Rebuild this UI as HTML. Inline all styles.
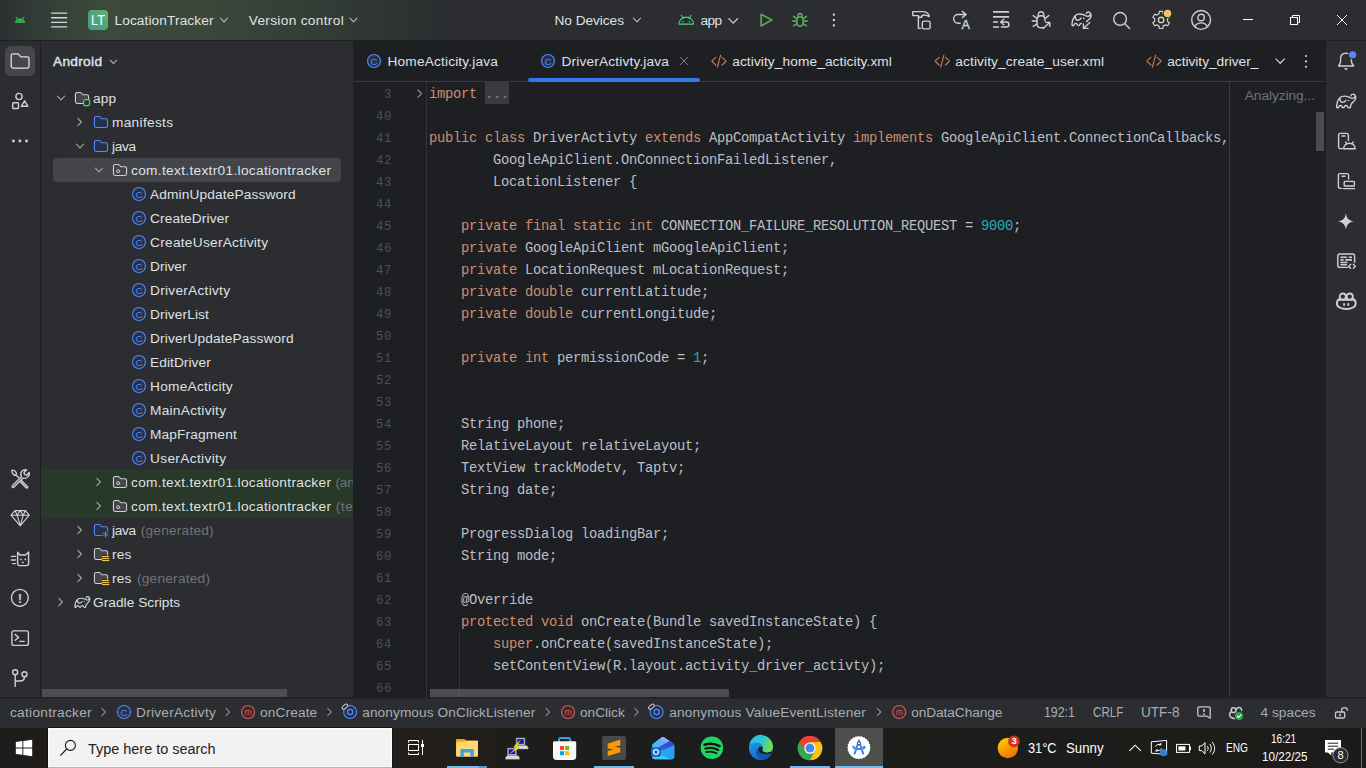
<!DOCTYPE html>
<html lang="en"><head><meta charset="utf-8"><title>LocationTracker - DriverActivty.java</title>
<style>
html,body{margin:0;padding:0;}
body{width:1366px;height:768px;overflow:hidden;background:#2b2d30;position:relative;font-family:"Liberation Sans",sans-serif;}
#root{position:absolute;left:0;top:0;width:1366px;height:768px;overflow:hidden;}
#root div,#root span,#root svg,#root pre{position:absolute;white-space:pre;}
#root pre{margin:0;}
#root pre span{position:static;}
#root span span{position:static;}
</style></head><body><div id="root">
<div style="left:0px;top:0px;width:1366px;height:40px;background:#2b2d30;background:linear-gradient(90deg,#2c2f30 0px,#333d37 40px,#3b4a3c 100px,#3a483b 200px,#343f37 300px,#2e3332 400px,#2b2d30 450px);"></div>
<div style="left:0px;top:40px;width:1366px;height:1px;background:#1e1f22;"></div>
<div style="left:0px;top:41px;width:40px;height:657px;background:#2b2d30;"></div>
<div style="left:40px;top:41px;width:1px;height:657px;background:#1e1f22;"></div>
<div style="left:41px;top:41px;width:312px;height:657px;background:#2b2d30;"></div>
<div style="left:1325px;top:41px;width:1px;height:657px;background:#1e1f22;"></div>
<div style="left:1326px;top:41px;width:40px;height:657px;background:#2b2d30;"></div>
<div style="left:0px;top:697px;width:1366px;height:1px;background:#1e1f22;"></div>
<div style="left:0px;top:698px;width:1366px;height:1px;background:#25272a;"></div>
<div style="left:0px;top:699px;width:1366px;height:29px;background:#2b2d30;"></div>
<div style="left:0px;top:728px;width:1366px;height:40px;background:#1c1c1c;background:linear-gradient(90deg,#1f1d1b 0px,#1f1c1a 300px,#241f1a 400px,#201d1a 480px,#1d1d1d 600px,#1c1d1f 760px,#1c1d1e 880px,#1c1e1a 900px,#1c1d1a 1100px,#1c1b19 1366px);"></div>
<div style="left:88px;top:10px;width:20px;height:20px;background:#4a9d7a;border-radius:4px;background:linear-gradient(45deg,#3e9b89,#60af69);"></div>
<span style="left:91.3px;top:10.0px;line-height:20px;font-size:14.2px;color:#ffffff;transform:scaleX(0.9023);transform-origin:0 50%;">LT</span>
<span style="left:114.5px;top:11.0px;line-height:20px;font-size:13.7px;color:#dfe1e5;letter-spacing:0.097px;">LocationTracker</span>
<span style="left:248.7px;top:11.0px;line-height:20px;font-size:13.7px;color:#dfe1e5;letter-spacing:0.318px;">Version control</span>
<span style="left:554.5px;top:11.0px;line-height:20px;font-size:13.7px;color:#dfe1e5;letter-spacing:-0.054px;">No Devices</span>
<span style="left:700.5px;top:11.0px;line-height:20px;font-size:13.7px;color:#dfe1e5;letter-spacing:-0.672px;">app</span>
<span style="left:53px;top:52.0px;line-height:20px;font-size:13.7px;color:#dfe1e5;letter-spacing:0.302px;-webkit-text-stroke:0.45px #dfe1e5;">Android</span>
<div style="left:53px;top:158px;width:288px;height:24px;background:#43454a;border-radius:4px;"></div>
<div style="left:41px;top:470px;width:312px;height:48px;background:#283829;"></div>
<span style="left:93px;top:89.0px;line-height:20px;font-size:13.7px;color:#dfe1e5;letter-spacing:0.078px;">app</span>
<span style="left:112px;top:113.0px;line-height:20px;font-size:13.7px;color:#dfe1e5;letter-spacing:0.303px;">manifests</span>
<span style="left:112px;top:137.0px;line-height:20px;font-size:13.7px;color:#dfe1e5;letter-spacing:-0.37px;">java</span>
<span style="left:131px;top:161.0px;line-height:20px;font-size:13.7px;color:#dfe1e5;letter-spacing:0.317px;">com.text.textr01.locationtracker</span>
<span style="left:150px;top:185.0px;line-height:20px;font-size:13.7px;color:#dfe1e5;letter-spacing:0.143px;">AdminUpdatePassword</span>
<span style="left:150px;top:209.0px;line-height:20px;font-size:13.7px;color:#dfe1e5;letter-spacing:0.128px;">CreateDriver</span>
<span style="left:150px;top:233.0px;line-height:20px;font-size:13.7px;color:#dfe1e5;letter-spacing:0.274px;">CreateUserActivity</span>
<span style="left:150px;top:257.0px;line-height:20px;font-size:13.7px;color:#dfe1e5;">Driver</span>
<span style="left:150px;top:281.0px;line-height:20px;font-size:13.7px;color:#dfe1e5;letter-spacing:0.266px;">DriverActivty</span>
<span style="left:150px;top:305.0px;line-height:20px;font-size:13.7px;color:#dfe1e5;letter-spacing:0.11px;">DriverList</span>
<span style="left:150px;top:329.0px;line-height:20px;font-size:13.7px;color:#dfe1e5;letter-spacing:0.151px;">DriverUpdatePassword</span>
<span style="left:150px;top:353.0px;line-height:20px;font-size:13.7px;color:#dfe1e5;letter-spacing:0.078px;">EditDriver</span>
<span style="left:150px;top:377.0px;line-height:20px;font-size:13.7px;color:#dfe1e5;letter-spacing:0.258px;">HomeActicity</span>
<span style="left:150px;top:401.0px;line-height:20px;font-size:13.7px;color:#dfe1e5;letter-spacing:0.271px;">MainActivity</span>
<span style="left:150px;top:425.0px;line-height:20px;font-size:13.7px;color:#dfe1e5;letter-spacing:0.15px;">MapFragment</span>
<span style="left:150px;top:449.0px;line-height:20px;font-size:13.7px;color:#dfe1e5;letter-spacing:0.341px;">UserActivity</span>
<span style="left:131px;top:473.0px;line-height:20px;font-size:13.7px;color:#dfe1e5;letter-spacing:0.317px;">com.text.textr01.locationtracker</span>
<span style="left:335.5px;top:473.0px;line-height:20px;font-size:13.7px;color:#6f737a;letter-spacing:-0.241px;">(androidTest)</span>
<span style="left:131px;top:497.0px;line-height:20px;font-size:13.7px;color:#dfe1e5;letter-spacing:0.317px;">com.text.textr01.locationtracker</span>
<span style="left:335.7px;top:497.0px;line-height:20px;font-size:13.7px;color:#6f737a;letter-spacing:0.562px;">(test)</span>
<span style="left:112px;top:521.0px;line-height:20px;font-size:13.7px;color:#dfe1e5;letter-spacing:-0.37px;">java</span>
<span style="left:140.7px;top:521.0px;line-height:20px;font-size:13.7px;color:#6f737a;letter-spacing:0.223px;">(generated)</span>
<span style="left:112px;top:545.0px;line-height:20px;font-size:13.7px;color:#dfe1e5;letter-spacing:0.142px;">res</span>
<span style="left:112px;top:569.0px;line-height:20px;font-size:13.7px;color:#dfe1e5;letter-spacing:0.142px;">res</span>
<span style="left:137px;top:569.0px;line-height:20px;font-size:13.7px;color:#6f737a;letter-spacing:0.223px;">(generated)</span>
<span style="left:93px;top:593.0px;line-height:20px;font-size:13.7px;color:#dfe1e5;letter-spacing:0.037px;">Gradle Scripts</span>
<div style="left:42px;top:689px;width:245px;height:8px;background:#4d4e51;"></div>
<div style="left:353px;top:41px;width:972px;height:657px;background:#1e1f22;"></div>
<div style="left:354px;top:81px;width:971px;height:1px;background:#393b40;"></div>
<div style="left:528px;top:78px;width:172px;height:4px;background:#3574f0;border-radius:2px;"></div>
<span style="left:387.5px;top:52.0px;line-height:20px;font-size:13.7px;color:#dfe1e5;letter-spacing:0.165px;">HomeActicity.java</span>
<span style="left:561.4px;top:52.0px;line-height:20px;font-size:13.7px;color:#dfe1e5;letter-spacing:0.17px;">DriverActivty.java</span>
<span style="left:732.2px;top:52.0px;line-height:20px;font-size:13.7px;color:#dfe1e5;letter-spacing:0.1px;">activity_home_acticity.xml</span>
<span style="left:955.3px;top:52.0px;line-height:20px;font-size:13.7px;color:#dfe1e5;letter-spacing:0.115px;">activity_create_user.xml</span>
<span style="left:1167.2px;top:52.0px;line-height:20px;font-size:13.7px;color:#dfe1e5;letter-spacing:-0.005px;">activity_driver_</span>
<span style="left:1244.8px;top:86.0px;line-height:20px;font-size:13.7px;color:#6f737a;letter-spacing:-0.07px;">Analyzing...</span>
<div style="left:426px;top:82px;width:1px;height:616px;background:#313438;"></div>
<div style="left:1229px;top:82px;width:1px;height:615px;background:#393b40;"></div>
<div style="left:459px;top:632px;width:1px;height:65px;background:#313438;"></div>
<div style="left:485px;top:82px;width:24px;height:22px;background:#393b40;"></div>
<div style="left:1316px;top:112px;width:8px;height:39px;background:#4a4b4e;"></div>
<div style="left:430px;top:689px;width:299px;height:8px;background:#4d4e51;"></div>
<div style="left:354px;top:82px;width:972px;height:615px;overflow:hidden;"><pre style="left:0;top:1.5px;width:38px;text-align:right;color:#4b5059;font-family:'Liberation Mono',monospace;font-size:13.8px;letter-spacing:-0.281px;line-height:22px;font-size:12.2px;letter-spacing:0.68px;">3
40
41
42
43
44
45
46
47
48
49
50
51
52
53
54
55
56
57
58
59
60
61
62
63
64
65
66</pre><pre style="left:75px;top:1.5px;color:#bcbec4;font-family:'Liberation Mono',monospace;font-size:13.8px;letter-spacing:-0.281px;line-height:22px;"><span style="color:#cf8e6d">import</span> <span style="color:#868a91">...</span>

<span style="color:#cf8e6d">public</span> <span style="color:#cf8e6d">class</span> DriverActivty <span style="color:#cf8e6d">extends</span> AppCompatActivity <span style="color:#cf8e6d">implements</span> GoogleApiClient.ConnectionCallbacks,
        GoogleApiClient.OnConnectionFailedListener,
        LocationListener {

    <span style="color:#cf8e6d">private</span> <span style="color:#cf8e6d">final</span> <span style="color:#cf8e6d">static</span> <span style="color:#cf8e6d">int</span> CONNECTION_FAILURE_RESOLUTION_REQUEST = <span style="color:#2aacb8">9000</span>;
    <span style="color:#cf8e6d">private</span> GoogleApiClient mGoogleApiClient;
    <span style="color:#cf8e6d">private</span> LocationRequest mLocationRequest;
    <span style="color:#cf8e6d">private</span> <span style="color:#cf8e6d">double</span> currentLatitude;
    <span style="color:#cf8e6d">private</span> <span style="color:#cf8e6d">double</span> currentLongitude;

    <span style="color:#cf8e6d">private</span> <span style="color:#cf8e6d">int</span> permissionCode = <span style="color:#2aacb8">1</span>;


    String phone;
    RelativeLayout relativeLayout;
    TextView trackModetv, Taptv;
    String date;

    ProgressDialog loadingBar;
    String mode;

    @Override
    <span style="color:#cf8e6d">protected</span> <span style="color:#cf8e6d">void</span> onCreate(Bundle savedInstanceState) {
        <span style="color:#cf8e6d">super</span>.onCreate(savedInstanceState);
        setContentView(R.layout.activity_driver_activty);
</pre></div>
<div style="left:430px;top:689px;width:299px;height:8px;background:#4c4d50;"></div>
<div style="left:459px;top:689px;width:1px;height:8px;background:#58595d;"></div>
<span style="left:10px;top:703.0px;line-height:20px;font-size:13.7px;color:#a8adb5;letter-spacing:0.27px;">cationtracker</span>
<span style="left:136px;top:703.0px;line-height:20px;font-size:13.7px;color:#a8adb5;letter-spacing:0.249px;">DriverActivty</span>
<span style="left:260px;top:703.0px;line-height:20px;font-size:13.7px;color:#a8adb5;letter-spacing:0.127px;">onCreate</span>
<span style="left:362.2px;top:703.0px;line-height:20px;font-size:13.7px;color:#a8adb5;letter-spacing:0.08px;">anonymous OnClickListener</span>
<span style="left:580px;top:703.0px;line-height:20px;font-size:13.7px;color:#a8adb5;letter-spacing:-0.015px;">onClick</span>
<span style="left:669.3px;top:703.0px;line-height:20px;font-size:13.7px;color:#a8adb5;letter-spacing:0.157px;">anonymous ValueEventListener</span>
<span style="left:911.3px;top:703.0px;line-height:20px;font-size:13.7px;color:#a8adb5;letter-spacing:-0.099px;">onDataChange</span>
<span style="left:1044.4px;top:702.0px;line-height:20px;font-size:14.2px;color:#a8adb5;transform:scaleX(0.8672);transform-origin:0 50%;">192:1</span>
<span style="left:1092.8px;top:702.0px;line-height:20px;font-size:14.2px;color:#a8adb5;transform:scaleX(0.8202);transform-origin:0 50%;">CRLF</span>
<span style="left:1140.6px;top:702.0px;line-height:20px;font-size:14.2px;color:#a8adb5;transform:scaleX(0.9576);transform-origin:0 50%;">UTF-8</span>
<span style="left:1260.5px;top:703.0px;line-height:20px;font-size:13.7px;color:#a8adb5;letter-spacing:0.029px;">4 spaces</span>
<div style="left:47px;top:727px;width:346px;height:41px;background:#151515;"></div>
<div style="left:48px;top:728px;width:344px;height:39px;background:#fafafa;"></div>
<div style="left:49px;top:729px;width:342px;height:38px;background:#f2f2f2;"></div>
<div style="left:48px;top:767px;width:344px;height:1px;background:#b8b8b8;"></div>
<span style="left:88.2px;top:738.66px;line-height:20px;font-size:15.4px;color:#222222;transform:scaleX(0.938);transform-origin:0 50%;">Type here to search</span>
<div style="left:835px;top:728px;width:48px;height:40px;background:#4d4f4c;"></div>
<div style="left:447px;top:766px;width:40px;height:2px;background:#76b9ed;"></div>
<div style="left:594px;top:766px;width:40px;height:2px;background:#76b9ed;"></div>
<div style="left:790px;top:766px;width:40px;height:2px;background:#76b9ed;"></div>
<div style="left:835px;top:766px;width:48px;height:2px;background:#76b9ed;"></div>
<div style="left:478.6px;top:766px;width:0.8px;height:2px;background:#1c1c1c;"></div>
<div style="left:479.4px;top:766px;width:7.6px;height:2px;background:#5f98c8;"></div>
<span style="left:1028.4px;top:737.87px;line-height:20px;font-size:14.8px;color:#ffffff;transform:scaleX(0.865);transform-origin:0 50%;">31°C</span>
<span style="left:1066.4px;top:737.87px;line-height:20px;font-size:14.8px;color:#ffffff;transform:scaleX(0.8959);transform-origin:0 50%;">Sunny</span>
<span style="left:1225.6px;top:737.63px;line-height:20px;font-size:12.6px;color:#ffffff;transform:scaleX(0.806);transform-origin:0 50%;">ENG</span>
<span style="left:1270.8px;top:728.84px;line-height:20px;font-size:12px;color:#ffffff;transform:scaleX(0.8391);transform-origin:0 50%;">16:21</span>
<span style="left:1261.6px;top:746.84px;line-height:20px;font-size:12px;color:#ffffff;transform:scaleX(0.9718);transform-origin:0 50%;">10/22/25</span>
<svg style="left:0;top:0" width="1366" height="768" viewBox="0 0 1366 768" fill="none"><g transform="translate(0 0)" ><path d="M15 22.9 A5.05 4.7 0 0 1 25.1 22.9 Z" fill="#34a853"/><path d="M16.1 17.2 L18.1 20 M24 17.2 L22 20" stroke="#34a853" stroke-width="1.1" fill="none" stroke-linecap="round" stroke-linejoin="round"/><rect x="17.3" y="20.6" width="0.6" height="1.5" fill="#237a41"/><rect x="22.2" y="20.6" width="0.6" height="1.5" fill="#237a41"/></g><rect x="51" y="12.549999999999999" width="16.2" height="1.3" rx="0.5" fill="#d3d5da"/><rect x="51" y="17.1" width="16.2" height="1.3" rx="0.5" fill="#d3d5da"/><rect x="51" y="21.650000000000002" width="16.2" height="1.3" rx="0.5" fill="#d3d5da"/><rect x="51" y="26.200000000000003" width="16.2" height="1.3" rx="0.5" fill="#d3d5da"/><path d="M220.45 18.2 L224 21.8 L227.55 18.2" stroke="#b4b8bf" stroke-width="1.1" fill="none" stroke-linecap="round" stroke-linejoin="round"/><path d="M349.95 18.2 L353.5 21.8 L357.05 18.2" stroke="#b4b8bf" stroke-width="1.1" fill="none" stroke-linecap="round" stroke-linejoin="round"/><path d="M633.45 18.2 L637 21.8 L640.55 18.2" stroke="#b4b8bf" stroke-width="1.1" fill="none" stroke-linecap="round" stroke-linejoin="round"/><path d="M728.9000000000001 18.75 L733.2 23.049999999999997 L737.5 18.75" stroke="#ced0d6" stroke-width="1.2" fill="none" stroke-linecap="round" stroke-linejoin="round"/><g transform="translate(678 10)" ><path d="M0.9 14.1 A7.3 7 0 0 1 15.5 14.1 Z" stroke="#3ddc84" stroke-width="1.05" fill="none" stroke-linecap="round" stroke-linejoin="round"/><path d="M3.4 5.3 L5.3 8.4 M13 5.3 L11.1 8.4" stroke="#3ddc84" stroke-width="1.05" fill="none" stroke-linecap="round" stroke-linejoin="round"/><circle cx="5" cy="11.7" r="0.7" fill="#3ddc84"/><circle cx="11.4" cy="11.7" r="0.7" fill="#3ddc84"/></g><path d="M761.2 14.3 L771.8 20.05 L761.2 25.9 Z" stroke="#5aa55c" stroke-width="1.8" fill="none" stroke-linecap="round" stroke-linejoin="round"/><g transform="translate(790 10)" ><path d="M10 6.7 C12 6.7 13.1 8 13.1 10 V12.8 C13.1 14.8 12 16.1 10 16.1 C8 16.1 6.9 14.8 6.9 12.8 V10 C6.9 8 8 6.7 10 6.7 Z" stroke="#5aa55c" stroke-width="1.6" fill="none" stroke-linecap="round" stroke-linejoin="round"/><path d="M7.7 6.8 C7.7 4.7 8.7 3.6 10 3.6 C11.3 3.6 12.3 4.7 12.3 6.8" stroke="#5aa55c" stroke-width="1.6" fill="none" stroke-linecap="round" stroke-linejoin="round"/><path d="M3.5 6.4 L6.5 8.5 M2.8 11.1 H6.6 M3.5 15.9 L6.5 13.8 M16.5 6.4 L13.5 8.5 M17.2 11.1 H13.4 M16.5 15.9 L13.5 13.8" stroke="#5aa55c" stroke-width="1.6" fill="none" stroke-linecap="round" stroke-linejoin="round"/></g><circle cx="833.9" cy="14.7" r="1.15" fill="#dfe1e5"/><circle cx="833.9" cy="20" r="1.15" fill="#dfe1e5"/><circle cx="833.9" cy="25.4" r="1.15" fill="#dfe1e5"/><g transform="translate(911 10)" ><path d="M1.8 1.6 H11.6 C15.2 1.6 17.6 3.6 18.3 6.5 L15.2 5.3 C13.8 4.7 12.2 4.9 10.8 5.8 V7.2 H7.4 V5.6 H1.8 Z" stroke="#ced0d6" stroke-width="1.4" fill="none" stroke-linecap="round" stroke-linejoin="round"/><path d="M7.4 7.2 V18.4 H9.6" stroke="#ced0d6" stroke-width="1.4" fill="none" stroke-linecap="round" stroke-linejoin="round"/><rect x="11.3" y="11.1" width="7.8" height="7.8" rx="1.6" stroke="#ced0d6" stroke-width="1.4" fill="none" stroke-linecap="round" stroke-linejoin="round"/></g><g transform="translate(951 10)" ><path d="M9.2 13.2 H7 A4.35 4.35 0 0 1 7 4.5 H15 M11.3 1.4 L15.2 4.5 L11.3 7.6" stroke="#ced0d6" stroke-width="1.4" fill="none" stroke-linecap="round" stroke-linejoin="round"/><text x="14.6" y="18.7" font-size="12.6" font-family="Liberation Sans, sans-serif" text-anchor="middle" fill="#ced0d6" stroke="#ced0d6" stroke-width="0.35">A</text></g><g transform="translate(991 10)" ><path d="M2 1.9 H18.1 M2 6.9 H18.1 M2 12 H7 M2 17 H8" stroke="#ced0d6" stroke-width="1.7" fill="none" stroke-linecap="butt" stroke-linejoin="round"/><path d="M12.8 9.2 L9.6 12 L12.8 14.8 M9.8 12 H15.4 A2.5 2.5 0 0 1 15.4 17 H10.4" stroke="#ced0d6" stroke-width="1.5" fill="none" stroke-linecap="round" stroke-linejoin="round"/></g><g transform="translate(1031 10)" ><path d="M12.4 17.4 C11.6 17.7 10.8 17.8 10 17.8 C7.6 17.8 6 16 6 13.4 V9.8 C6 7.4 7.6 5.8 10 5.8 C12.4 5.8 14 7.4 14 9.8 V11" stroke="#ced0d6" stroke-width="1.4" fill="none" stroke-linecap="round" stroke-linejoin="round"/><path d="M7 6.4 C7 3.4 8.2 1.8 10 1.8 C11.8 1.8 13 3.4 13 6.4" stroke="#ced0d6" stroke-width="1.4" fill="none" stroke-linecap="round" stroke-linejoin="round"/><path d="M2.2 5.6 L5.8 8.2 M1.2 11 H5.8 M2.2 16.4 L5.8 14 M17.8 5.6 L14.4 8.2" stroke="#ced0d6" stroke-width="1.4" fill="none" stroke-linecap="round" stroke-linejoin="round"/><path d="M12.2 18.6 L18.6 12.5 M14.8 12.4 H18.8 V16.4" stroke="#ced0d6" stroke-width="1.4" fill="none" stroke-linecap="round" stroke-linejoin="round"/></g><g transform="translate(1067.35 5.9) scale(1.0)"><path d="M4.7 19.4 C4.5 16 5.5 12.5 8 9.6 C10 7.6 15 7.6 18.1 9.7 C20 10.8 22 10.6 22.8 9 C23.6 7.4 22.6 6 21 6.1 C19.8 6.2 19 6.8 19 7.7 M23.2 7.6 C24.4 10 23 12.6 20.6 14.4 C20 14.8 19.6 15.2 19.2 15.6 M4.7 19.4 C5.5 20.4 6.6 19.4 7 18.4 C7.6 17.2 9 17.2 9.8 18.4 C10.6 20.2 11.8 20.2 12.6 18.4 C12.9 17.8 13.4 17.5 14 17.5 M7.9 10 C7.9 12.6 8.8 14.4 10.4 14.4 C12 14.4 13.2 13.4 13.8 12.3" stroke="#ced0d6" stroke-width="1.4" fill="none" stroke-linecap="round" stroke-linejoin="round"/><circle cx="16.4" cy="12.5" r="0.8" fill="#ced0d6"/></g><path d="M1089.8 22.4 L1083.6 28.2 M1083.4 24 V28.4 H1088" stroke="#ced0d6" stroke-width="1.4" fill="none" stroke-linecap="round" stroke-linejoin="round"/><g transform="translate(1111 10)" ><circle cx="9.1" cy="8.9" r="6.35" stroke="#ced0d6" stroke-width="1.4" fill="none" stroke-linecap="round" stroke-linejoin="round"/><path d="M13.8 13.7 L18.6 18.5" stroke="#ced0d6" stroke-width="1.4" fill="none" stroke-linecap="round" stroke-linejoin="round"/></g><g transform="translate(1151 10)" ><path d="M8.03 3.79 L8.38 1.42 L11.82 1.42 L12.17 3.79 L14.40 5.07 L16.63 4.20 L18.35 7.18 L16.47 8.67 L16.47 11.23 L18.35 12.72 L16.63 15.70 L14.40 14.83 L12.17 16.11 L11.82 18.48 L8.38 18.48 L8.03 16.11 L5.80 14.83 L3.57 15.70 L1.85 12.72 L3.73 11.23 L3.73 8.67 L1.85 7.18 L3.57 4.20 L5.80 5.07 Z" stroke="#ced0d6" stroke-width="1.2" fill="none" stroke-linecap="round" stroke-linejoin="round" /><circle cx="10.1" cy="9.95" r="2.7" stroke="#ced0d6" stroke-width="1.4" fill="none" stroke-linecap="round" stroke-linejoin="round"/><circle cx="16.5" cy="3.4" r="4.6" fill="#2b2d30"/><circle cx="16.5" cy="3.4" r="3.7" fill="#f2c55c"/></g><g transform="translate(1191 10)" ><circle cx="10.1" cy="9.95" r="9.4" stroke="#ced0d6" stroke-width="1.4" fill="none" stroke-linecap="round" stroke-linejoin="round"/><circle cx="10.1" cy="7.5" r="3.25" stroke="#ced0d6" stroke-width="1.4" fill="none" stroke-linecap="round" stroke-linejoin="round"/><path d="M3.6 16.7 C5.2 14.2 7.4 12.9 10.1 12.9 C12.8 12.9 15 14.2 16.6 16.7" stroke="#ced0d6" stroke-width="1.4" fill="none" stroke-linecap="round" stroke-linejoin="round"/></g><rect x="1243" y="19" width="10" height="1" fill="#ffffff"/><rect x="1290.5" y="17.5" width="7" height="7" fill="none" stroke="#ffffff" stroke-width="1"/><path d="M1292.5 17 V15.5 H1299.5 V22.5 H1298" fill="none" stroke="#ffffff" stroke-width="1"/><path d="M1337 15 L1347 25 M1347 15 L1337 25" stroke="#ffffff" stroke-width="1" fill="none"/><rect x="5" y="46" width="30" height="30" rx="6" fill="#45474b"/><path d="M12.799999999999999 53.9 H17.4 C18.2 53.9 18.6 54.199999999999996 19.1 54.8 L20.799999999999997 56.8 H27.2 C28.2 56.8 29.0 57.6 29.0 58.6 V66.3 C29.0 67.3 28.2 68.1 27.2 68.1 H13.0 C12.0 68.1 11.2 67.3 11.2 66.3 V55.5 C11.2 54.6 11.899999999999999 53.9 12.799999999999999 53.9 Z" stroke="#dfe1e5" stroke-width="1.3" fill="none" stroke-linecap="round" stroke-linejoin="round"/><circle cx="19" cy="96.5" r="3.1" stroke="#ced0d6" stroke-width="1.4" fill="none" stroke-linecap="round" stroke-linejoin="round"/><rect x="12.7" y="102.7" width="5.8" height="5.8" rx="0.8" stroke="#ced0d6" stroke-width="1.4" fill="none" stroke-linecap="round" stroke-linejoin="round"/><path d="M24.6 100.8 L27.8 106.2 H21.4 Z" stroke="#ced0d6" stroke-width="1.4" fill="none" stroke-linecap="round" stroke-linejoin="round"/><circle cx="13.4" cy="141" r="1.45" fill="#ced0d6"/><circle cx="19.9" cy="141" r="1.45" fill="#ced0d6"/><circle cx="26.5" cy="141" r="1.45" fill="#ced0d6"/><g transform="translate(10 468)" ><path d="M2.6 17.6 L11.2 9 M4 19 L12.6 10.4 M2.6 17.6 C2 18.2 2 18.8 2.6 19.2 C3.1 19.7 3.6 19.6 4 19" stroke="#ced0d6" stroke-width="1.4" fill="none" stroke-linecap="round" stroke-linejoin="round"/><path d="M11.4 8.8 C10.4 6.6 10.8 4.2 12.4 2.8 C13.6 1.8 15.2 1.4 16.6 1.8 L14 4.6 L14.6 6.6 L16.6 7.2 L19.2 4.4 C19.6 5.8 19.4 7.4 18.2 8.6 C16.8 10.2 14.6 10.6 12.8 10.2" stroke="#ced0d6" stroke-width="1.4" fill="none" stroke-linecap="round" stroke-linejoin="round"/><path d="M2 2.2 C3 2 4.6 2.6 5.6 3.8 C6.4 4.8 6.6 6 6.2 6.6 L5.6 7.2 C4.8 7.4 3.8 7 3 6 C2 4.8 1.6 3.2 2 2.2 Z M6 7 L8.8 9.8 M11.4 12.4 L17.4 18.4 C17.9 18.9 17.9 19.3 17.4 19.7 C17 20.1 16.5 20.1 16 19.7 L10 13.6" stroke="#ced0d6" stroke-width="1.4" fill="none" stroke-linecap="round" stroke-linejoin="round"/></g><g transform="translate(10 508)" ><path d="M5 2.6 H15.4 L19.2 7.2 L10.2 17.8 L1 7.2 Z M1 7.2 H19.2 M5 2.6 L7.2 7.2 L10.2 17.8 L13.2 7.2 L15.4 2.6 M7.2 7.2 L10.2 2.6 L13.2 7.2" stroke="#ced0d6" stroke-width="1.1" fill="none" stroke-linecap="round" stroke-linejoin="round"/></g><g transform="translate(10 548)" ><path d="M7.6 4.2 L10 7 H15.6 L18.6 4 V15.6 C18.6 16.8 17.8 17.6 16.6 17.6 H9.6 C8.4 17.6 7.6 16.8 7.6 15.6 Z" stroke="#ced0d6" stroke-width="1.4" fill="none" stroke-linecap="round" stroke-linejoin="round"/><path d="M1.4 8.4 H5.4 M1.4 12 H5.4 M2.6 15.6 H5.4" stroke="#ced0d6" stroke-width="1.4" fill="none" stroke-linecap="round" stroke-linejoin="round"/><circle cx="10.9" cy="11.4" r="0.9" fill="#ced0d6"/><circle cx="15.3" cy="11.4" r="0.9" fill="#ced0d6"/><path d="M12.4 14.2 H13.8 L13.1 15 Z" stroke="#ced0d6" stroke-width="0.8" fill="#ced0d6" stroke-linecap="round" stroke-linejoin="round"/></g><circle cx="19.85" cy="597.8" r="8.4" stroke="#ced0d6" stroke-width="1.4" fill="none" stroke-linecap="round" stroke-linejoin="round"/><text x="19.85" y="602.9" font-size="13.2" font-weight="700" font-family="Liberation Sans, sans-serif" text-anchor="middle" fill="#ced0d6">!</text><rect x="11.9" y="630.9" width="16.5" height="14.5" rx="2" stroke="#ced0d6" stroke-width="1.4" fill="none" stroke-linecap="round" stroke-linejoin="round"/><path d="M15.2 634.6 L18.6 637.4 L15.2 640.2 M19.8 641.4 H24.2" stroke="#ced0d6" stroke-width="1.4" fill="none" stroke-linecap="round" stroke-linejoin="round"/><circle cx="15.2" cy="672.3" r="2.5" stroke="#ced0d6" stroke-width="1.4" fill="none" stroke-linecap="round" stroke-linejoin="round"/><circle cx="24.5" cy="674.2" r="2.5" stroke="#ced0d6" stroke-width="1.4" fill="none" stroke-linecap="round" stroke-linejoin="round"/><path d="M15.2 674.8 V686.4 M24.5 676.7 C24.5 679.6 22.8 681 20 681 H15.2" stroke="#ced0d6" stroke-width="1.4" fill="none" stroke-linecap="round" stroke-linejoin="round"/><g transform="translate(1336 51)" ><path d="M2.5 15 C3.9 13.4 4.6 12 4.6 10 V7.8 C4.6 4.4 6.8 2.2 10 2.2 C13.2 2.2 15.4 4.4 15.4 7.8 V10 C15.4 12 16.1 13.4 17.7 15 Z" stroke="#ced0d6" stroke-width="1.4" fill="none" stroke-linecap="round" stroke-linejoin="round"/><path d="M8 17.3 H12 C11.6 18.4 10.9 18.9 10 18.9 C9.1 18.9 8.4 18.4 8 17.3 Z" fill="#ced0d6"/><circle cx="16.6" cy="3.75" r="4.5" fill="#2b2d30"/><circle cx="16.6" cy="3.75" r="3.6" fill="#548af7"/></g><g transform="translate(1332 88) scale(1.0)"><path d="M4.7 19.4 C4.5 16 5.5 12.5 8 9.6 C10 7.6 15 7.6 18.1 9.7 C20 10.8 22 10.6 22.8 9 C23.6 7.4 22.6 6 21 6.1 C19.8 6.2 19 6.8 19 7.7 M23.2 7.6 C24.4 10 23 12.6 20.6 14.4 C19 15.6 18.4 17 18.4 19.4 M4.7 19.4 C5.5 20.4 6.6 19.4 7 18.4 C7.6 17.2 9 17.2 9.8 18.4 C10.6 20.2 11.8 20.2 12.6 18.4 C13.2 17.2 14.8 17.2 15.4 18.4 C16.2 20.2 17.6 20.2 18.4 19.4 M7.9 10 C7.9 12.6 8.8 14.4 10.4 14.4 C12 14.4 13.2 13.4 13.8 12.3" stroke="#ced0d6" stroke-width="1.4" fill="none" stroke-linecap="round" stroke-linejoin="round"/><circle cx="16.4" cy="12.5" r="0.8" fill="#ced0d6"/></g><g transform="translate(1336 131)" ><path d="M6.4 17.6 H4.4 C3.2 17.6 2.6 17 2.6 15.8 V4.2 C2.6 3 3.2 2.4 4.4 2.4 H10.6 C11.8 2.4 12.4 3 12.4 4.2 V9.4" stroke="#ced0d6" stroke-width="1.4" fill="none" stroke-linecap="round" stroke-linejoin="round"/><path d="M6 5 H9" stroke="#ced0d6" stroke-width="1.4" fill="none" stroke-linecap="round" stroke-linejoin="round"/><path d="M7.6 17.8 A5.8 5.6 0 0 1 19.2 17.8 Z" stroke="#ced0d6" stroke-width="1.4" fill="none" stroke-linecap="round" stroke-linejoin="round"/><path d="M9.6 11 L10.8 12.8 M17.2 11 L16 12.8" stroke="#ced0d6" stroke-width="1.4" fill="none" stroke-linecap="round" stroke-linejoin="round"/></g><g transform="translate(1336 171)" ><path d="M5.6 17.4 H4.2 C3 17.4 2.4 16.8 2.4 15.6 V4.4 C2.4 3.2 3 2.6 4.2 2.6 H10.8 C12 2.6 12.6 3.2 12.6 4.4 V8" stroke="#ced0d6" stroke-width="1.4" fill="none" stroke-linecap="round" stroke-linejoin="round"/><path d="M6 5.2 H9" stroke="#ced0d6" stroke-width="1.4" fill="none" stroke-linecap="round" stroke-linejoin="round"/><rect x="8.2" y="10.4" width="10.2" height="4.6" rx="0.8" stroke="#ced0d6" stroke-width="1.4" fill="none" stroke-linecap="round" stroke-linejoin="round"/><path d="M7.4 17.6 H18.6" stroke="#ced0d6" stroke-width="1.4" fill="none" stroke-linecap="round" stroke-linejoin="round"/></g><path d="M1345.9 213.2 C1346.5 218.2 1349 220.8 1354.1 221.4 C1349 222 1346.5 224.6 1345.9 229.6 C1345.3 224.6 1342.8 222 1337.7 221.4 C1342.8 220.8 1345.3 218.2 1345.9 213.2 Z" fill="#ced0d6"/><g transform="translate(1336 251)" ><path d="M12 16.4 H3.8 C2.6 16.4 1.8 15.6 1.8 14.4 V5 C1.8 3.8 2.6 3 3.8 3 H16.6 C17.8 3 18.6 3.8 18.6 5 V11.2" stroke="#ced0d6" stroke-width="1.4" fill="none" stroke-linecap="round" stroke-linejoin="round"/><path d="M4.4 6.3 H11 M12.6 6.3 H16 M4.4 8.9 H7.6 M9.2 8.9 H16 M4.4 11.5 H11.4 M4.4 13.8 H11" stroke="#ced0d6" stroke-width="1.6" fill="none" stroke-linecap="butt" stroke-linejoin="round"/><path d="M14.6 13.4 L12.8 15.3 L14.6 17.2 M17.4 13.4 L19.2 15.3 L17.4 17.2" stroke="#ced0d6" stroke-width="1.5" fill="none" stroke-linecap="round" stroke-linejoin="round"/></g><g transform="translate(1336 291)" ><path d="M3.6 8 C1.6 8.8 0.9 10.4 0.9 12.4 C0.9 15.8 5 18 10.3 18 C15.6 18 19.7 15.8 19.7 12.4 C19.7 10.4 19 8.8 17 8" stroke="#ced0d6" stroke-width="1.9" fill="none" stroke-linecap="round" stroke-linejoin="round"/><circle cx="6.8" cy="5.6" r="3.1" stroke="#ced0d6" stroke-width="1.8" fill="none" stroke-linecap="round" stroke-linejoin="round"/><circle cx="13.7" cy="5.6" r="3.1" stroke="#ced0d6" stroke-width="1.8" fill="none" stroke-linecap="round" stroke-linejoin="round"/><path d="M3.6 8.9 H17" stroke="#ced0d6" stroke-width="1.6" fill="none" stroke-linecap="round" stroke-linejoin="round"/><path d="M8.1 12.2 V14.8 M12.3 12.2 V14.8" stroke="#ced0d6" stroke-width="1.9" fill="none" stroke-linecap="butt" stroke-linejoin="round"/></g><path d="M110.10000000000001 60.099999999999994 L113.4 63.5 L116.7 60.099999999999994" stroke="#a3a6ad" stroke-width="1.1" fill="none" stroke-linecap="round" stroke-linejoin="round"/><path d="M57.45 96.2 L61 99.8 L64.55 96.2" stroke="#a3a6ad" stroke-width="1.1" fill="none" stroke-linecap="round" stroke-linejoin="round"/><path d="M76.45 144.2 L80 147.8 L83.55 144.2" stroke="#a3a6ad" stroke-width="1.1" fill="none" stroke-linecap="round" stroke-linejoin="round"/><path d="M95.45 168.2 L99 171.8 L102.55 168.2" stroke="#a3a6ad" stroke-width="1.1" fill="none" stroke-linecap="round" stroke-linejoin="round"/><path d="M77.8 118.45 L81.39999999999999 122 L77.8 125.55" stroke="#a3a6ad" stroke-width="1.1" fill="none" stroke-linecap="round" stroke-linejoin="round"/><path d="M96.8 478.45 L100.39999999999999 482 L96.8 485.55" stroke="#a3a6ad" stroke-width="1.1" fill="none" stroke-linecap="round" stroke-linejoin="round"/><path d="M96.8 502.45 L100.39999999999999 506 L96.8 509.55" stroke="#a3a6ad" stroke-width="1.1" fill="none" stroke-linecap="round" stroke-linejoin="round"/><path d="M77.8 526.45 L81.39999999999999 530 L77.8 533.55" stroke="#a3a6ad" stroke-width="1.1" fill="none" stroke-linecap="round" stroke-linejoin="round"/><path d="M77.8 550.45 L81.39999999999999 554 L77.8 557.55" stroke="#a3a6ad" stroke-width="1.1" fill="none" stroke-linecap="round" stroke-linejoin="round"/><path d="M77.8 574.45 L81.39999999999999 578 L77.8 581.55" stroke="#a3a6ad" stroke-width="1.1" fill="none" stroke-linecap="round" stroke-linejoin="round"/><path d="M58.800000000000004 598.45 L62.4 602 L58.800000000000004 605.55" stroke="#a3a6ad" stroke-width="1.1" fill="none" stroke-linecap="round" stroke-linejoin="round"/><path d="M75.45 94.14999999999999 C75.45 93.14999999999999 76.05 92.55 77.05 92.55 H80.05 L82.75 94.75 H86.95 C87.95 94.75 88.55 95.35 88.55 96.35 V98.95 H82.85000000000001 V103.45 H77.05 C76.05 103.45 75.45 102.85000000000001 75.45 101.85000000000001 Z" fill="#43454a"/><path d="M82.85000000000001 103.45 H77.05 C76.05 103.45 75.45 102.85000000000001 75.45 101.85000000000001 V94.14999999999999 C75.45 93.14999999999999 76.05 92.55 77.05 92.55 H80.05 C80.65 92.55 81.05 92.75 81.45 93.25 L82.75 94.75 H86.95 C87.95 94.75 88.55 95.35 88.55 96.35 V98.95" stroke="#ced0d6" stroke-width="1.1" fill="none" stroke-linecap="round" stroke-linejoin="round"/><rect x="83.6" y="99.6" width="6" height="6" rx="1.4" stroke="#3ddc84" stroke-width="1.2" fill="#253627" stroke-linecap="round" stroke-linejoin="round"/><path d="M96.05 116.55 H99.05 C99.65 116.55 100.05 116.75 100.45 117.25 L101.75 118.75 H105.95 C106.95 118.75 107.55 119.35 107.55 120.35 V125.85000000000001 C107.55 126.85000000000001 106.95 127.45 105.95 127.45 H96.05 C95.05 127.45 94.45 126.85000000000001 94.45 125.85000000000001 V118.14999999999999 C94.45 117.14999999999999 95.05 116.55 96.05 116.55 Z" stroke="#548af7" stroke-width="1.1" fill="#25324d" stroke-linecap="round" stroke-linejoin="round"/><path d="M96.05 140.55 H99.05 C99.65 140.55 100.05 140.75 100.45 141.25 L101.75 142.75 H105.95 C106.95 142.75 107.55 143.35000000000002 107.55 144.35000000000002 V149.85000000000002 C107.55 150.85000000000002 106.95 151.45000000000002 105.95 151.45000000000002 H96.05 C95.05 151.45000000000002 94.45 150.85000000000002 94.45 149.85000000000002 V142.15 C94.45 141.15 95.05 140.55 96.05 140.55 Z" stroke="#548af7" stroke-width="1.1" fill="#25324d" stroke-linecap="round" stroke-linejoin="round"/><path d="M115.05 164.55 H118.05 C118.65 164.55 119.05 164.75 119.45 165.25 L120.75 166.75 H124.95 C125.95 166.75 126.55 167.35000000000002 126.55 168.35000000000002 V173.85000000000002 C126.55 174.85000000000002 125.95 175.45000000000002 124.95 175.45000000000002 H115.05 C114.05 175.45000000000002 113.45 174.85000000000002 113.45 173.85000000000002 V166.15 C113.45 165.15 114.05 164.55 115.05 164.55 Z" stroke="#ced0d6" stroke-width="1.1" fill="none" stroke-linecap="round" stroke-linejoin="round"/><circle cx="118.10000000000001" cy="171.2" r="1.5" stroke="#ced0d6" stroke-width="1" fill="none" stroke-linecap="round" stroke-linejoin="round"/><path d="M115.05 476.55 H118.05 C118.65 476.55 119.05 476.75 119.45 477.25 L120.75 478.75 H124.95 C125.95 478.75 126.55 479.35 126.55 480.35 V485.84999999999997 C126.55 486.84999999999997 125.95 487.45 124.95 487.45 H115.05 C114.05 487.45 113.45 486.84999999999997 113.45 485.84999999999997 V478.15000000000003 C113.45 477.15000000000003 114.05 476.55 115.05 476.55 Z" stroke="#ced0d6" stroke-width="1.1" fill="#43454a" stroke-linecap="round" stroke-linejoin="round"/><circle cx="118.10000000000001" cy="483.2" r="1.5" stroke="#ced0d6" stroke-width="1" fill="none" stroke-linecap="round" stroke-linejoin="round"/><path d="M115.05 500.55 H118.05 C118.65 500.55 119.05 500.75 119.45 501.25 L120.75 502.75 H124.95 C125.95 502.75 126.55 503.35 126.55 504.35 V509.84999999999997 C126.55 510.84999999999997 125.95 511.45 124.95 511.45 H115.05 C114.05 511.45 113.45 510.84999999999997 113.45 509.84999999999997 V502.15000000000003 C113.45 501.15000000000003 114.05 500.55 115.05 500.55 Z" stroke="#ced0d6" stroke-width="1.1" fill="#43454a" stroke-linecap="round" stroke-linejoin="round"/><circle cx="118.10000000000001" cy="507.2" r="1.5" stroke="#ced0d6" stroke-width="1" fill="none" stroke-linecap="round" stroke-linejoin="round"/><circle cx="139" cy="194" r="6.5" stroke="#548af7" stroke-width="1.1" fill="#25324d" stroke-linecap="round" stroke-linejoin="round"/><text x="139.1" y="197.5" font-size="9.8" font-family="Liberation Sans, sans-serif" text-anchor="middle" fill="#548af7">C</text><circle cx="139" cy="218" r="6.5" stroke="#548af7" stroke-width="1.1" fill="#25324d" stroke-linecap="round" stroke-linejoin="round"/><text x="139.1" y="221.5" font-size="9.8" font-family="Liberation Sans, sans-serif" text-anchor="middle" fill="#548af7">C</text><circle cx="139" cy="242" r="6.5" stroke="#548af7" stroke-width="1.1" fill="#25324d" stroke-linecap="round" stroke-linejoin="round"/><text x="139.1" y="245.5" font-size="9.8" font-family="Liberation Sans, sans-serif" text-anchor="middle" fill="#548af7">C</text><circle cx="139" cy="266" r="6.5" stroke="#548af7" stroke-width="1.1" fill="#25324d" stroke-linecap="round" stroke-linejoin="round"/><text x="139.1" y="269.5" font-size="9.8" font-family="Liberation Sans, sans-serif" text-anchor="middle" fill="#548af7">C</text><circle cx="139" cy="290" r="6.5" stroke="#548af7" stroke-width="1.1" fill="#25324d" stroke-linecap="round" stroke-linejoin="round"/><text x="139.1" y="293.5" font-size="9.8" font-family="Liberation Sans, sans-serif" text-anchor="middle" fill="#548af7">C</text><circle cx="139" cy="314" r="6.5" stroke="#548af7" stroke-width="1.1" fill="#25324d" stroke-linecap="round" stroke-linejoin="round"/><text x="139.1" y="317.5" font-size="9.8" font-family="Liberation Sans, sans-serif" text-anchor="middle" fill="#548af7">C</text><circle cx="139" cy="338" r="6.5" stroke="#548af7" stroke-width="1.1" fill="#25324d" stroke-linecap="round" stroke-linejoin="round"/><text x="139.1" y="341.5" font-size="9.8" font-family="Liberation Sans, sans-serif" text-anchor="middle" fill="#548af7">C</text><circle cx="139" cy="362" r="6.5" stroke="#548af7" stroke-width="1.1" fill="#25324d" stroke-linecap="round" stroke-linejoin="round"/><text x="139.1" y="365.5" font-size="9.8" font-family="Liberation Sans, sans-serif" text-anchor="middle" fill="#548af7">C</text><circle cx="139" cy="386" r="6.5" stroke="#548af7" stroke-width="1.1" fill="#25324d" stroke-linecap="round" stroke-linejoin="round"/><text x="139.1" y="389.5" font-size="9.8" font-family="Liberation Sans, sans-serif" text-anchor="middle" fill="#548af7">C</text><circle cx="139" cy="410" r="6.5" stroke="#548af7" stroke-width="1.1" fill="#25324d" stroke-linecap="round" stroke-linejoin="round"/><text x="139.1" y="413.5" font-size="9.8" font-family="Liberation Sans, sans-serif" text-anchor="middle" fill="#548af7">C</text><circle cx="139" cy="434" r="6.5" stroke="#548af7" stroke-width="1.1" fill="#25324d" stroke-linecap="round" stroke-linejoin="round"/><text x="139.1" y="437.5" font-size="9.8" font-family="Liberation Sans, sans-serif" text-anchor="middle" fill="#548af7">C</text><circle cx="139" cy="458" r="6.5" stroke="#548af7" stroke-width="1.1" fill="#25324d" stroke-linecap="round" stroke-linejoin="round"/><text x="139.1" y="461.5" font-size="9.8" font-family="Liberation Sans, sans-serif" text-anchor="middle" fill="#548af7">C</text><path d="M94.45 526.15 C94.45 525.15 95.05 524.55 96.05 524.55 H99.05 L101.75 526.75 H105.95 C106.95 526.75 107.55 527.3499999999999 107.55 528.3499999999999 V530.9499999999999 H101.85000000000001 V535.4499999999999 H96.05 C95.05 535.4499999999999 94.45 534.8499999999999 94.45 533.8499999999999 Z" fill="#25324d"/><path d="M101.85000000000001 535.4499999999999 H96.05 C95.05 535.4499999999999 94.45 534.8499999999999 94.45 533.8499999999999 V526.15 C94.45 525.15 95.05 524.55 96.05 524.55 H99.05 C99.65 524.55 100.05 524.75 100.45 525.25 L101.75 526.75 H105.95 C106.95 526.75 107.55 527.3499999999999 107.55 528.3499999999999 V530.9499999999999" stroke="#548af7" stroke-width="1.1" fill="none" stroke-linecap="round" stroke-linejoin="round"/><path d="M105.5 531.4 V537.4 M102.9 532.9 L108.1 535.9 M102.9 535.9 L108.1 532.9" stroke="#548af7" stroke-width="0.9" fill="none" stroke-linecap="round" stroke-linejoin="round"/><path d="M94.45 550.15 C94.45 549.15 95.05 548.55 96.05 548.55 H99.05 L101.75 550.75 H105.95 C106.95 550.75 107.55 551.3499999999999 107.55 552.3499999999999 V554.9499999999999 H101.85000000000001 V559.4499999999999 H96.05 C95.05 559.4499999999999 94.45 558.8499999999999 94.45 557.8499999999999 Z" fill="#43454a"/><path d="M101.85000000000001 559.4499999999999 H96.05 C95.05 559.4499999999999 94.45 558.8499999999999 94.45 557.8499999999999 V550.15 C94.45 549.15 95.05 548.55 96.05 548.55 H99.05 C99.65 548.55 100.05 548.75 100.45 549.25 L101.75 550.75 H105.95 C106.95 550.75 107.55 551.3499999999999 107.55 552.3499999999999 V554.9499999999999" stroke="#ced0d6" stroke-width="1.1" fill="none" stroke-linecap="round" stroke-linejoin="round"/><rect x="101.8" y="556" width="7.4" height="1.1" fill="#f2c55c"/><rect x="101.8" y="558" width="7.4" height="1.1" fill="#f2c55c"/><rect x="101.8" y="560" width="7.4" height="1.1" fill="#f2c55c"/><path d="M94.45 574.15 C94.45 573.15 95.05 572.55 96.05 572.55 H99.05 L101.75 574.75 H105.95 C106.95 574.75 107.55 575.3499999999999 107.55 576.3499999999999 V578.9499999999999 H101.85000000000001 V583.4499999999999 H96.05 C95.05 583.4499999999999 94.45 582.8499999999999 94.45 581.8499999999999 Z" fill="#43454a"/><path d="M101.85000000000001 583.4499999999999 H96.05 C95.05 583.4499999999999 94.45 582.8499999999999 94.45 581.8499999999999 V574.15 C94.45 573.15 95.05 572.55 96.05 572.55 H99.05 C99.65 572.55 100.05 572.75 100.45 573.25 L101.75 574.75 H105.95 C106.95 574.75 107.55 575.3499999999999 107.55 576.3499999999999 V578.9499999999999" stroke="#ced0d6" stroke-width="1.1" fill="none" stroke-linecap="round" stroke-linejoin="round"/><rect x="101.8" y="580" width="7.4" height="1.1" fill="#f2c55c"/><rect x="101.8" y="582" width="7.4" height="1.1" fill="#f2c55c"/><rect x="101.8" y="584" width="7.4" height="1.1" fill="#f2c55c"/><g transform="translate(71.26 591.9) scale(0.783)"><path d="M4.7 19.4 C4.5 16 5.5 12.5 8 9.6 C10 7.6 15 7.6 18.1 9.7 C20 10.8 22 10.6 22.8 9 C23.6 7.4 22.6 6 21 6.1 C19.8 6.2 19 6.8 19 7.7 M23.2 7.6 C24.4 10 23 12.6 20.6 14.4 C19 15.6 18.4 17 18.4 19.4 M4.7 19.4 C5.5 20.4 6.6 19.4 7 18.4 C7.6 17.2 9 17.2 9.8 18.4 C10.6 20.2 11.8 20.2 12.6 18.4 C13.2 17.2 14.8 17.2 15.4 18.4 C16.2 20.2 17.6 20.2 18.4 19.4 M7.9 10 C7.9 12.6 8.8 14.4 10.4 14.4 C12 14.4 13.2 13.4 13.8 12.3" stroke="#ced0d6" stroke-width="1.4687100893997445" fill="none" stroke-linecap="round" stroke-linejoin="round"/><circle cx="16.4" cy="12.5" r="0.8" fill="#ced0d6"/></g><circle cx="374" cy="61" r="6.5" stroke="#548af7" stroke-width="1.1" fill="#25324d" stroke-linecap="round" stroke-linejoin="round"/><text x="374.1" y="64.5" font-size="9.8" font-family="Liberation Sans, sans-serif" text-anchor="middle" fill="#548af7">C</text><circle cx="548" cy="61" r="6.5" stroke="#548af7" stroke-width="1.1" fill="#25324d" stroke-linecap="round" stroke-linejoin="round"/><text x="548.1" y="64.5" font-size="9.8" font-family="Liberation Sans, sans-serif" text-anchor="middle" fill="#548af7">C</text><path d="M680.3 57.2 L687.8 64.8 M687.8 57.2 L680.3 64.8" stroke="#7c8087" stroke-width="1" fill="none" stroke-linecap="round" stroke-linejoin="round"/><path d="M715.9 57.4 L711.8000000000001 61.2 L715.9 65 M722.1 57.4 L726.2 61.2 L722.1 65 M720.6 55.2 L717.4 67.2" stroke="#c77d55" stroke-width="1.15" fill="none" stroke-linecap="round" stroke-linejoin="round"/><path d="M939.1999999999999 57.4 L935.1 61.2 L939.1999999999999 65 M945.4 57.4 L949.5 61.2 L945.4 65 M943.9 55.2 L940.6999999999999 67.2" stroke="#c77d55" stroke-width="1.15" fill="none" stroke-linecap="round" stroke-linejoin="round"/><path d="M1150.8999999999999 57.4 L1146.8 61.2 L1150.8999999999999 65 M1157.1 57.4 L1161.1999999999998 61.2 L1157.1 65 M1155.6 55.2 L1152.3999999999999 67.2" stroke="#c77d55" stroke-width="1.15" fill="none" stroke-linecap="round" stroke-linejoin="round"/><path d="M1275.9 58.95 L1280.2 63.25 L1284.5 58.95" stroke="#ced0d6" stroke-width="1.2" fill="none" stroke-linecap="round" stroke-linejoin="round"/><circle cx="1306" cy="56" r="1.1" fill="#ced0d6"/><circle cx="1306" cy="61.4" r="1.1" fill="#ced0d6"/><circle cx="1306" cy="66.8" r="1.1" fill="#ced0d6"/><path d="M417.90000000000003 90.0 L421.7 93.6 L417.90000000000003 97.19999999999999" stroke="#9a9da3" stroke-width="1.1" fill="none" stroke-linecap="round" stroke-linejoin="round"/><path d="M101.9 708.45 L105.5 712 L101.9 715.55" stroke="#868a91" stroke-width="1.1" fill="none" stroke-linecap="round" stroke-linejoin="round"/><path d="M226.0 708.45 L229.60000000000002 712 L226.0 715.55" stroke="#868a91" stroke-width="1.1" fill="none" stroke-linecap="round" stroke-linejoin="round"/><path d="M327.59999999999997 708.45 L331.2 712 L327.59999999999997 715.55" stroke="#868a91" stroke-width="1.1" fill="none" stroke-linecap="round" stroke-linejoin="round"/><path d="M546.0 708.45 L549.5999999999999 712 L546.0 715.55" stroke="#868a91" stroke-width="1.1" fill="none" stroke-linecap="round" stroke-linejoin="round"/><path d="M634.6 708.45 L638.1999999999999 712 L634.6 715.55" stroke="#868a91" stroke-width="1.1" fill="none" stroke-linecap="round" stroke-linejoin="round"/><path d="M877.2 708.45 L880.8 712 L877.2 715.55" stroke="#868a91" stroke-width="1.1" fill="none" stroke-linecap="round" stroke-linejoin="round"/><circle cx="124" cy="712" r="6.5" stroke="#548af7" stroke-width="1.1" fill="#25324d" stroke-linecap="round" stroke-linejoin="round"/><text x="124.1" y="715.5" font-size="9.8" font-family="Liberation Sans, sans-serif" text-anchor="middle" fill="#548af7">C</text><circle cx="248" cy="712" r="6.5" stroke="#db5c5c" stroke-width="1.1" fill="#402929" stroke-linecap="round" stroke-linejoin="round"/><text x="248" y="714.6" font-size="9.4" font-family="Liberation Sans, sans-serif" text-anchor="middle" fill="#db5c5c" textLength="7" lengthAdjust="spacingAndGlyphs">m</text><circle cx="568" cy="712" r="6.5" stroke="#db5c5c" stroke-width="1.1" fill="#402929" stroke-linecap="round" stroke-linejoin="round"/><text x="568" y="714.6" font-size="9.4" font-family="Liberation Sans, sans-serif" text-anchor="middle" fill="#db5c5c" textLength="7" lengthAdjust="spacingAndGlyphs">m</text><circle cx="899.2" cy="712" r="6.5" stroke="#db5c5c" stroke-width="1.1" fill="#402929" stroke-linecap="round" stroke-linejoin="round"/><text x="899.2" y="714.6" font-size="9.4" font-family="Liberation Sans, sans-serif" text-anchor="middle" fill="#db5c5c" textLength="7" lengthAdjust="spacingAndGlyphs">m</text><circle cx="350.1" cy="712" r="6.5" stroke="#548af7" stroke-width="1.1" fill="#25324d" stroke-linecap="round" stroke-linejoin="round"/><circle cx="350.1" cy="712" r="2.6" stroke="#548af7" stroke-width="1.2" fill="none" stroke-linecap="round" stroke-linejoin="round"/><rect x="346.90000000000003" y="710.4" width="6.4" height="3.2" rx="1.6" transform="rotate(-38 344.90000000000003 706.6) translate(-5.2 -5.4)" stroke="#ced0d6" stroke-width="1" fill="#2b2d30" stroke-linecap="round" stroke-linejoin="round"/><circle cx="656.6" cy="712" r="6.5" stroke="#548af7" stroke-width="1.1" fill="#25324d" stroke-linecap="round" stroke-linejoin="round"/><circle cx="656.6" cy="712" r="2.6" stroke="#548af7" stroke-width="1.2" fill="none" stroke-linecap="round" stroke-linejoin="round"/><rect x="653.4" y="710.4" width="6.4" height="3.2" rx="1.6" transform="rotate(-38 651.4 706.6) translate(-5.2 -5.4)" stroke="#ced0d6" stroke-width="1" fill="#2b2d30" stroke-linecap="round" stroke-linejoin="round"/><path d="M1207 716.2 H1199.4 C1198.4 716.2 1197.8 715.6 1197.8 714.6 V708.4 C1197.8 707.4 1198.4 706.8 1199.4 706.8 H1208.6 C1209.6 706.8 1210.2 707.4 1210.2 708.4 V718.2 Z" stroke="#c6c9ce" stroke-width="1.3" fill="none" stroke-linecap="round" stroke-linejoin="round"/><path d="M1204 708.9 V712.1" stroke="#c6c9ce" stroke-width="1.6" fill="none" stroke-linecap="butt" stroke-linejoin="round"/><rect x="1203.2" y="713.4" width="1.6" height="1.6" fill="#c6c9ce"/><path d="M1234.2 718.6 C1231.4 718.2 1229.6 716.8 1229.6 714.6 C1229.6 713.4 1230.2 712.4 1231.2 711.8" stroke="#c6c9ce" stroke-width="1.6" fill="none" stroke-linecap="round" stroke-linejoin="round"/><circle cx="1233.6" cy="710.2" r="2.4" stroke="#c6c9ce" stroke-width="1.5" fill="none" stroke-linecap="round" stroke-linejoin="round"/><path d="M1236.4 709.4 C1236.8 708.2 1237.8 707.6 1239 707.6 C1240.6 707.6 1241.6 708.8 1241.6 710.4" stroke="#c6c9ce" stroke-width="1.5" fill="none" stroke-linecap="round" stroke-linejoin="round"/><circle cx="1239" cy="716.1" r="4.6" fill="#2b2d30"/><circle cx="1239" cy="716.1" r="4" fill="#2da84e"/><path d="M1237.2 716.2 L1238.5 717.5 L1240.9 714.9" stroke="#ffffff" stroke-width="1.1" fill="none" stroke-linecap="round" stroke-linejoin="round"/><rect x="1335.5" y="712" width="9.2" height="6" rx="1.2" stroke="#c6c9ce" stroke-width="1.3" fill="none" stroke-linecap="round" stroke-linejoin="round"/><path d="M1341.6 711.8 V710.2 C1341.6 708.4 1342.8 707.6 1344.4 707.6 C1346 707.6 1347.4 708.4 1347.4 710.2" stroke="#c6c9ce" stroke-width="1.3" fill="none" stroke-linecap="round" stroke-linejoin="round"/><rect x="1339.3" y="713.7" width="1.6" height="2.6" fill="#c6c9ce"/><path d="M15.8 742 L22.4 741.1 V747.5 H15.8 Z M23.3 741 L32.2 739.7 V747.5 H23.3 Z M15.8 748.4 H22.4 V754.8 L15.8 753.9 Z M23.3 748.4 H32.2 V756.2 L23.3 754.9 Z" fill="#ffffff"/><circle cx="70.4" cy="745.4" r="5" stroke="#1a1a1a" stroke-width="1.1" fill="none"/><path d="M66.8 749 L60.2 755.6" stroke="#1a1a1a" stroke-width="1.2" fill="none"/><path d="M408.5 742.6 V740.5 H418.5 V742.6 M408.5 752.6 V754.5 H418.5 V752.6" stroke="#ffffff" stroke-width="1" fill="none"/><rect x="408.5" y="744.5" width="10" height="6" stroke="#ffffff" stroke-width="1" fill="none"/><path d="M422.5 740 V755" stroke="#ffffff" stroke-width="1" fill="none"/><rect x="421" y="744" width="3" height="3" fill="#ffffff"/><path d="M456.2 740.2 C456.2 739.6 456.6 739.2 457.2 739.2 H464.6 L466 740.6 H477 C477.6 740.6 478 741 478 741.6 V756 H456.2 Z" fill="#f9c13c"/><path d="M456.2 742.4 H464.8 L466.2 741 H477.4 C477.8 741 478 741.3 478 741.8 V756 C478 756.4 477.7 756.7 477.2 756.7 H457 C456.5 756.7 456.2 756.4 456.2 756 Z" fill="#ffd970"/><path d="M456.2 739.9 C456.2 739.4 456.6 739 457.1 739 H464.6 V741.2 H456.2 Z" fill="#e9a400"/><path d="M460.4 756.7 V750.6 C460.4 749.6 461 749 462 749 H472.2 C473.2 749 473.8 749.6 473.8 750.6 V756.7 H470.4 V752.4 H463.8 V756.7 Z" fill="#3c9fe8"/><g transform="translate(515.6 737.4) scale(0.95)"><path d="M0.6 0.6 H9.8 V8 H0.6 Z" fill="#c8c8c8" stroke="#8c8c8c" stroke-width="0.6"/><rect x="1.8" y="1.8" width="6.8" height="5" fill="#0a10d8"/><path d="M-1.6 10.6 L0.2 8.4 H11.6 L13.2 10.6 V12.2 H-1.6 Z" fill="#dcdcdc" stroke="#8c8c8c" stroke-width="0.5"/></g><g transform="translate(507 747.6) scale(0.95)"><path d="M0.6 0.6 H9.8 V8 H0.6 Z" fill="#c8c8c8" stroke="#8c8c8c" stroke-width="0.6"/><rect x="1.8" y="1.8" width="6.8" height="5" fill="#0a10d8"/><path d="M-1.6 10.6 L0.2 8.4 H11.6 L13.2 10.6 V12.2 H-1.6 Z" fill="#dcdcdc" stroke="#8c8c8c" stroke-width="0.5"/></g><path d="M520.6 739.8 L513.8 746.4 L517 747 L510 753.6 L520 747.6 L516.8 746.8 Z" fill="#f5f000" stroke="#b0a800" stroke-width="0.4"/><path d="M559 742 V740 C559 738.6 559.9 737.9 561 737.9 H568.2 C569.3 737.9 570.2 738.6 570.2 740 V742" stroke="#2ea3e8" stroke-width="2" fill="none"/><path d="M553 742.8 C553 741.8 553.6 741.2 554.6 741.2 H574.6 C575.6 741.2 576.2 741.8 576.2 742.8 V756.4 C576.2 758.6 574.8 760 572.6 760 H556.6 C554.4 760 553 758.6 553 756.4 Z" fill="#f7f7f7"/><rect x="560" y="746" width="4" height="4" fill="#f25022"/><rect x="565.2" y="746" width="4" height="4" fill="#7fba00"/><rect x="560" y="751.2" width="4" height="4" fill="#00a4ef"/><rect x="565.2" y="751.2" width="4" height="4" fill="#ffb900"/><rect x="602.1" y="736" width="23.9" height="24" rx="2" fill="#494949"/><path d="M607.7 743.7 L620.3 739.6 V745.4 L614.4 746.7 L620.3 747.8 V752.2 L607.7 756 V751 L613.6 749.5 L607.7 748.6 Z" fill="#ff9800"/><defs><linearGradient id="ol1" x1="0" y1="0" x2="1" y2="1"><stop offset="0" stop-color="#3fd0f8"/><stop offset="1" stop-color="#1a86e6"/></linearGradient><linearGradient id="ol2" x1="0" y1="1" x2="1" y2="0"><stop offset="0" stop-color="#1a6fe0"/><stop offset="1" stop-color="#4b3cc6"/></linearGradient><linearGradient id="ol3" x1="0" y1="1" x2="1" y2="0"><stop offset="0" stop-color="#2bb8f4"/><stop offset="1" stop-color="#a7a6fa"/></linearGradient></defs><path d="M652.2 744.4 L661.8 737.3 C662.5 736.8 663.3 736.8 664 737.3 L673.4 743.4 C674 743.8 674.3 744.3 674.3 745 V756.6 C674.3 758.2 673.3 759.2 671.7 759.2 H654.8 C653.2 759.2 652.2 758.2 652.2 756.6 Z" fill="url(#ol1)"/><path d="M652.6 744.2 L661.8 737.3 C662.5 736.8 663.3 736.8 664 737.3 L669.6 740.9 L655.4 749 Z" fill="url(#ol3)"/><path d="M655.4 749 L669.6 740.9 L673.4 743.4 C674 743.8 674.3 744.3 674.3 745 L662.8 751.6 L658.6 751 Z" fill="url(#ol2)"/><path d="M658 751.4 L674.3 745.4 V756.6 C674.3 758.2 673.3 759.2 671.7 759.2 H660 Z" fill="#2aa4f2" opacity="0.85"/><path d="M652.2 752 L671 759.2 H654.8 C653.2 759.2 652.2 758.2 652.2 756.6 Z" fill="#36d0fa"/><rect x="651" y="747.5" width="9.7" height="9.2" rx="1.8" fill="#0f5fd0"/><text x="655.9" y="755.2" font-size="8.6" font-weight="700" font-family="Liberation Sans, sans-serif" text-anchor="middle" fill="#ffffff">O</text><circle cx="711.9" cy="747.8" r="11.3" fill="#1ed760"/><path d="M704.6 744.7 C709.4 743.2 715.2 743.7 719.6 746.2" stroke="#141414" stroke-width="2.5" fill="none" stroke-linecap="round"/><path d="M705.4 748.6 C709.6 747.4 714.4 747.8 718.2 750" stroke="#141414" stroke-width="2.1" fill="none" stroke-linecap="round"/><path d="M706.2 752.1 C709.6 751.2 713.4 751.5 716.6 753.3" stroke="#141414" stroke-width="1.7" fill="none" stroke-linecap="round"/><defs><linearGradient id="ed1" x1="0" y1="0" x2="0.6" y2="1"><stop offset="0" stop-color="#2aa6ee"/><stop offset="0.55" stop-color="#1583dc"/><stop offset="1" stop-color="#0b66c4"/></linearGradient><linearGradient id="ed2" x1="0" y1="0.2" x2="1" y2="0.5"><stop offset="0" stop-color="#35b4f2"/><stop offset="0.5" stop-color="#2cc6d2"/><stop offset="1" stop-color="#74e247"/></linearGradient></defs><g transform="translate(741 732) scale(0.0416667)"><circle cx="480" cy="380" r="290" fill="url(#ed1)"/><path d="M375 400 C340 500 380 610 480 650 C580 690 690 620 735 520 C640 560 500 550 430 465 C410 440 390 420 375 400 Z" fill="#0f56a8"/><path d="M470 345 C420 350 395 410 430 465 C480 540 640 550 735 515 C760 470 700 480 600 490 C540 480 510 450 520 420 C535 380 510 345 470 345 Z" fill="#1d1e20"/><path d="M735 515 C755 480 770 430 770 380 L770 520 Z" fill="#1d1e20"/><path d="M196 300 A290 290 0 0 1 770 350 C770 420 720 490 630 490 C570 490 520 470 510 440 C540 410 540 350 490 300 C440 250 330 230 196 300 Z" fill="url(#ed2)"/></g><path d="M809.95 748.1 L799.56 742.10 A12.0 12.0 0 0 1 820.34 742.10 Z" fill="#ea4335"/><path d="M809.95 748.1 L820.34 742.10 A12.0 12.0 0 0 1 809.95 760.10 Z" fill="#fbc116"/><path d="M809.95 748.1 L809.95 760.10 A12.0 12.0 0 0 1 799.56 742.10 Z" fill="#34a853"/><path d="M805.0500000000001 750.9 L799.35 742.00 A12.0 12.0 0 0 1 820.55 742.00 H809.95 Z" fill="#ea4335"/><path d="M814.85 750.9 L809.95 760.30 A12.0 12.0 0 0 0 820.55 742.00 H809.95 Z" fill="#fbc116"/><path d="M809.95 742.5 L805.0500000000001 750.9 L799.35 742.00 A12.0 12.0 0 0 0 809.95 760.30 L814.85 750.9 Z" fill="#34a853"/><circle cx="809.95" cy="748.1" r="5.7" fill="#ffffff"/><circle cx="809.95" cy="748.1" r="4.5" fill="#4285f4"/><path d="M870.60 747.60 L869.71 749.02 L870.20 750.63 L868.97 751.77 L869.03 753.45 L867.55 754.24 L867.17 755.87 L865.54 756.25 L864.75 757.73 L863.07 757.67 L861.93 758.90 L860.32 758.41 L858.90 759.30 L857.48 758.41 L855.87 758.90 L854.73 757.67 L853.05 757.73 L852.26 756.25 L850.63 755.87 L850.25 754.24 L848.77 753.45 L848.83 751.77 L847.60 750.63 L848.09 749.02 L847.20 747.60 L848.09 746.18 L847.60 744.57 L848.83 743.43 L848.77 741.75 L850.25 740.96 L850.63 739.33 L852.26 738.95 L853.05 737.47 L854.73 737.53 L855.87 736.30 L857.48 736.79 L858.90 735.90 L860.32 736.79 L861.93 736.30 L863.07 737.53 L864.75 737.47 L865.54 738.95 L867.17 739.33 L867.55 740.96 L869.03 741.75 L868.97 743.43 L870.20 744.57 L869.71 746.18 Z" fill="#ffffff"/><path d="M863.2 745.4 L866.2 747.6 L863.4 749.8 Z" fill="#3ddc84"/><path d="M858.9 741 L854.6 753.6 M858.9 741 L863.2 753.6 M853.4 746.8 C854.6 749.8 863.2 749.8 864.4 746.8" stroke="#4285f4" stroke-width="2.1" fill="none" stroke-linecap="round"/><circle cx="858.9" cy="743.3" r="1.5" fill="#ffffff" stroke="#333" stroke-width="0.9"/><path d="M858.9 739.4 V741.6" stroke="#4285f4" stroke-width="1.6"/><defs><linearGradient id="sun" x1="0.2" y1="0" x2="0.8" y2="1"><stop offset="0" stop-color="#ffd000"/><stop offset="1" stop-color="#f06a00"/></linearGradient></defs><circle cx="1007.8" cy="748" r="10.2" fill="url(#sun)"/><circle cx="1013.9" cy="741.4" r="5.8" fill="#d32f22"/><path d="M1129.4 750.8 L1135.1 745.2 L1140.8 750.8" stroke="#ffffff" stroke-width="1.1" fill="none"/><path d="M1151.3 741.8 L1166.6 740.4 V754.4 L1151.3 753.2 Z" stroke="#ffffff" stroke-width="1" fill="none"/><path d="M1155.4 746.6 C1156.4 744.6 1158.6 743.8 1160.6 744.6 M1160.8 743 V745 H1158.8 M1161.6 748.4 C1160.6 750.4 1158.4 751.2 1156.4 750.4 M1156.2 752 V750 H1158.2" stroke="#ffffff" stroke-width="1" fill="none"/><circle cx="1163.4" cy="752.6" r="3.6" fill="#2f80d8"/><rect x="1176.5" y="744.4" width="13" height="8" stroke="#ffffff" stroke-width="1" fill="none"/><rect x="1189.6" y="746.6" width="1.4" height="3.6" fill="#ffffff"/><rect x="1178.4" y="746.3" width="7" height="4.2" fill="#ffffff"/><path d="M1199.3 746 H1201.8 L1205 742.6 V754 L1201.8 750.6 H1199.3 Z" stroke="#ffffff" stroke-width="1" fill="none"/><path d="M1207.4 746 C1208.4 747.4 1208.4 749.2 1207.4 750.6 M1209.8 744 C1211.8 746.6 1211.8 750 1209.8 752.6 M1212.2 742 C1215.4 746 1215.4 750.6 1212.2 754.6" stroke="#ffffff" stroke-width="1" fill="none"/><path d="M1325 740 H1341 V752.4 H1331.2 L1331.2 755.6 L1328 752.4 H1325 Z" fill="#ffffff"/><path d="M1327.8 743.2 H1338.2 M1327.8 746.2 H1338.2 M1327.8 749.2 H1334" stroke="#1c1c1c" stroke-width="1" fill="none"/><circle cx="1340.5" cy="755.3" r="7.6" fill="#2b2b2b" stroke="#9a9a9a" stroke-width="1"/><rect x="1361" y="728" width="1" height="40" fill="#6a6a6a"/></svg>
<span style="left:1011.6px;top:735.4px;line-height:12px;font-size:9.5px;color:#ffffff;font-weight:700;">3</span>
<span style="left:1337.4px;top:749.3px;line-height:12px;font-size:11px;color:#ffffff;">8</span>
</div></body></html>
